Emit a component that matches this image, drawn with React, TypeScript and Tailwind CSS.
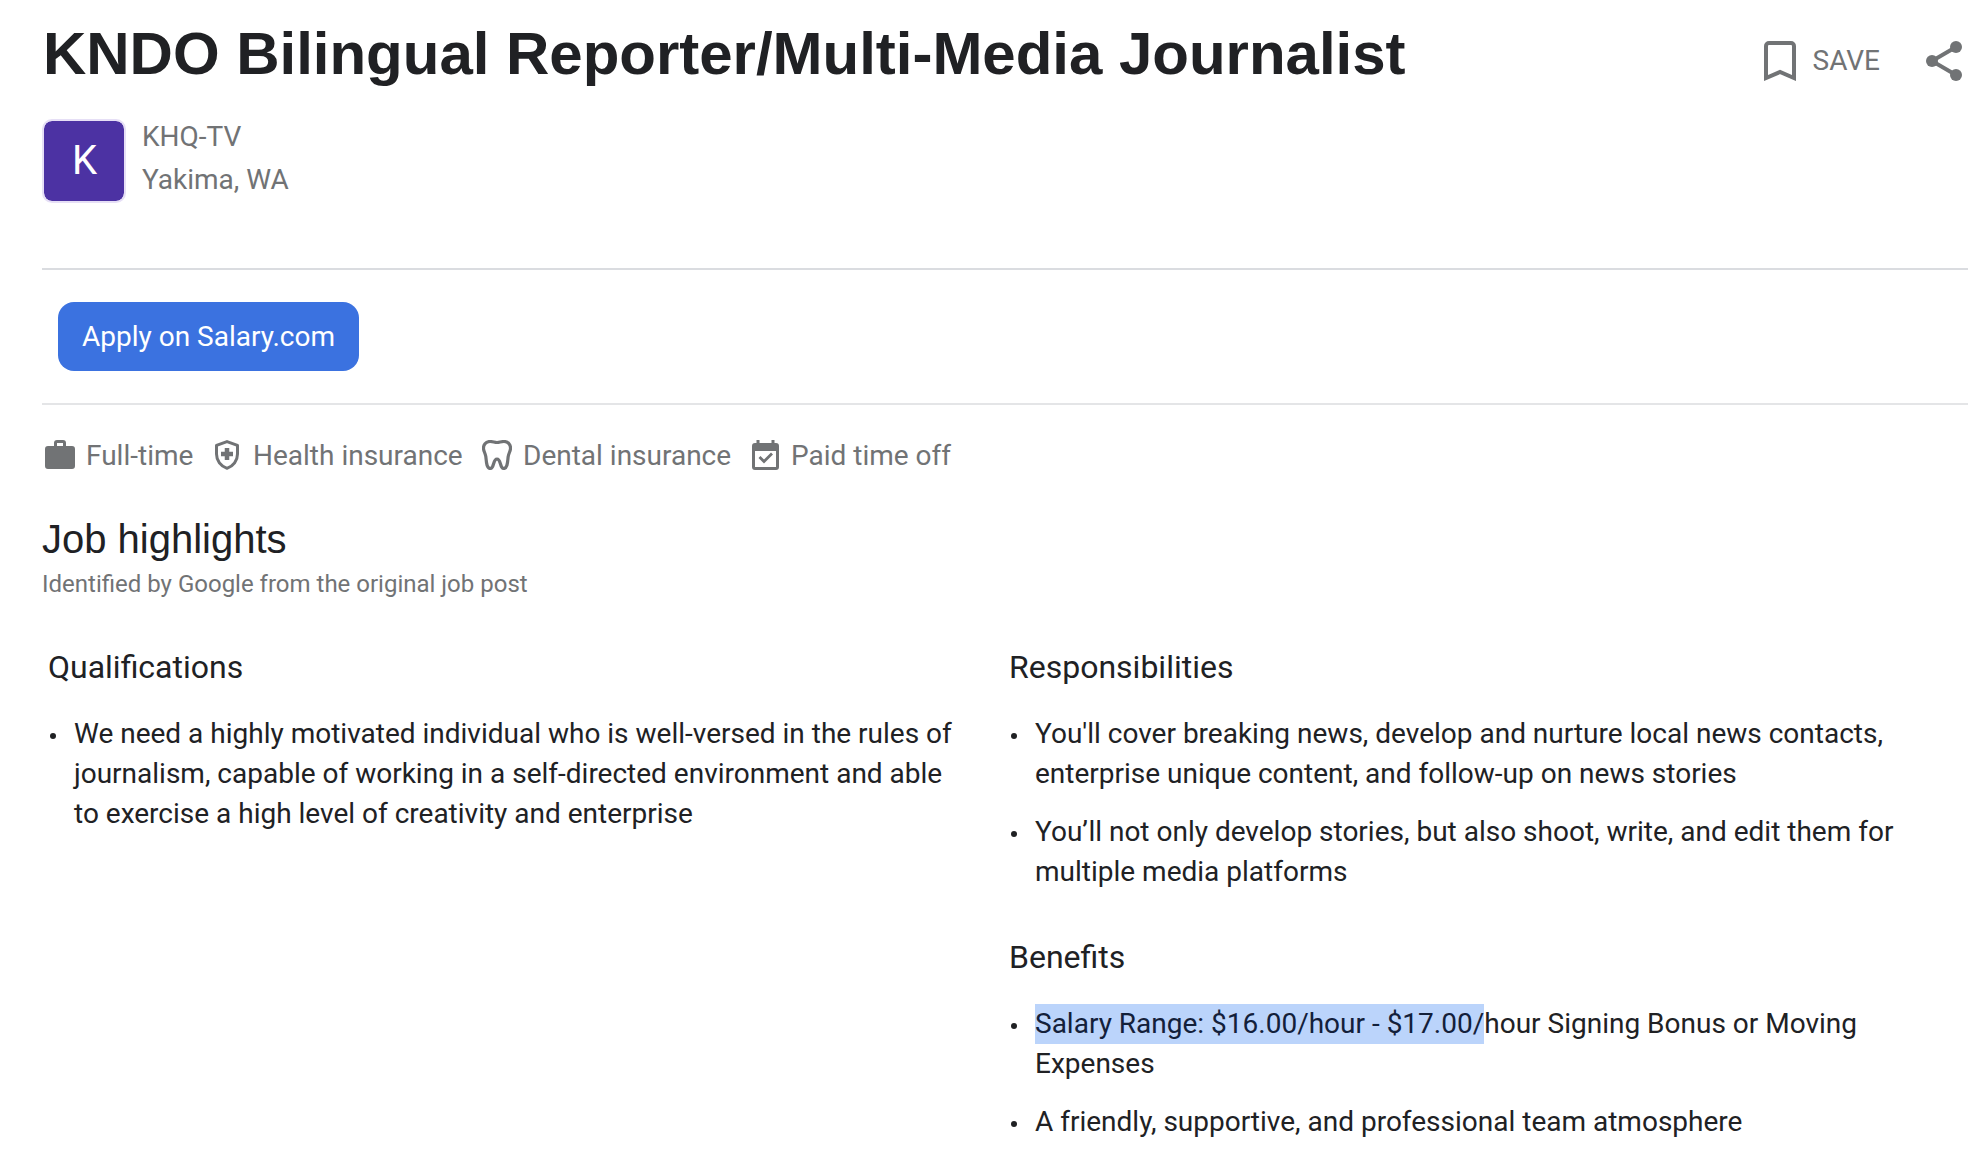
import React from "react";

type HighlightSectionProps = {
  title: string;
  items: React.ReactNode[];
};

type PerkProps = {
  icon: React.ReactNode;
  label: string;
  className?: string;
};

const BookmarkIcon = () => (
  <svg width="32" height="40" viewBox="0 0 32 40" fill="none">
    <path
      d="M2 37V5a3 3 0 0 1 3-3h22a3 3 0 0 1 3 3v32l-14-6z"
      stroke="currentColor"
      strokeWidth="4"
    />
  </svg>
);

const ShareIcon = () => (
  <svg width="36" height="40" viewBox="0 0 36 40">
    <path d="M30 6L6 20l24 14" fill="none" stroke="currentColor" strokeWidth="4" />
    <circle cx="30" cy="6" r="6" fill="currentColor" />
    <circle cx="6" cy="20" r="6" fill="currentColor" />
    <circle cx="30" cy="34" r="6" fill="currentColor" />
  </svg>
);

const BriefcaseIcon = () => (
  <svg width="30" height="30" viewBox="0 0 30 30" fill="currentColor">
    <path
      fillRule="evenodd"
      d="M9 6V3a3 3 0 0 1 3-3h6a3 3 0 0 1 3 3v3h6a3 3 0 0 1 3 3v17a3 3 0 0 1-3 3H3a3 3 0 0 1-3-3V9a3 3 0 0 1 3-3zm3 0h6V3h-6z"
    />
  </svg>
);

const ShieldIcon = () => (
  <svg width="24" height="30" viewBox="0 0 24 30">
    <path
      d="M12 1.600L22.500 5.400v8.600c0 6.600-4.200 12.200-10.500 14.300C5.700 26.200 1.500 20.600 1.500 14V5.400z"
      fill="none"
      stroke="currentColor"
      strokeWidth="3"
      strokeLinejoin="round"
    />
    <path d="M12 8v12M6 14h12" stroke="currentColor" strokeWidth="4.500" />
  </svg>
);

const ToothIcon = () => (
  <svg width="30" height="30" viewBox="0 0 30 30" fill="none">
    <path
      d="M8 1.500C3.500 1.500 1.300 5 1.500 8.500c.2 3 1.700 4.500 2.300 8 .6 3.800.3 12 4.400 12 4.300 0 2.500-9.500 6.800-9.500s2.500 9.500 6.800 9.500c4.100 0 3.800-8.200 4.400-12 .6-3.500 2.100-5 2.300-8C28.700 5 26.500 1.500 22 1.500c-3 0-4.500 1-7 1s-4-1-7-1z"
      stroke="currentColor"
      strokeWidth="3.200"
      strokeLinejoin="round"
    />
  </svg>
);

const CalendarIcon = () => (
  <svg width="27" height="30" viewBox="0 0 27 30" fill="none">
    <path
      fillRule="evenodd"
      fill="currentColor"
      d="M4.500 0h3v3h12V0h3v3H24a3 3 0 0 1 3 3v21a3 3 0 0 1-3 3H3a3 3 0 0 1-3-3V6a3 3 0 0 1 3-3h1.500zM3 11v16h21V11z"
    />
    <path d="M7.500 17l4.500 4.500 8-8" stroke="currentColor" strokeWidth="2.800" />
  </svg>
);

const Perk: React.FC<PerkProps> = ({ icon, label, className }) => (
  <div className={`flex items-center ${className ?? ""}`}>
    {icon}
    <span className="pt-0.5">{label}</span>
  </div>
);

const HighlightSection: React.FC<HighlightSectionProps> = ({ title, items }) => (
  <section>
    <h3 className="text-[32px] leading-10">{title}</h3>
    <ul className="mt-[27px] flex flex-col gap-[18px]">
      {items.map((item, index) => (
        <li key={index} className="flex text-[28px] leading-10">
          <span className="mt-[19px] mr-[18px] ml-[2px] size-1.5 shrink-0 rounded-full bg-[#202124]" />
          <span>{item}</span>
        </li>
      ))}
    </ul>
  </section>
);

const qualifications = [
  "We need a highly motivated individual who is well-versed in the rules of journalism, capable of working in a self-directed environment and able to exercise a high level of creativity and enterprise",
];

const responsibilities = [
  "You'll cover breaking news, develop and nurture local news contacts, enterprise unique content, and follow-up on news stories",
  "You’ll not only develop stories, but also shoot, write, and edit them for multiple media platforms",
];

const benefits = [
  <>
    <mark className="bg-[#bbd4fb] pt-[3px] pb-1 text-[#13203a]">
      Salary Range: $16.00/hour - $17.00/
    </mark>
    hour Signing Bonus or Moving Expenses
  </>,
  "A friendly, supportive, and professional team atmosphere",
];

const App: React.FC = () => {
  return (
    <main className="h-[1158px] w-[1968px] overflow-hidden bg-white pl-[42px] font-[Roboto,sans-serif] text-[#202124]">
      <header className="box-content flex h-[250px] justify-between border-b-2 border-[#dadce0] pt-[18px]">
        <div>
          <h1 className="pl-px font-['Liberation_Sans',Arial,sans-serif] text-[60px] leading-[72px] font-bold tracking-[-0.02px] whitespace-nowrap">
            KNDO Bilingual Reporter/Multi-Media Journalist
          </h1>
          <div className="mt-[25px] flex">
            <div className="mt-1 flex size-[84px] items-center justify-center rounded-[10px] border-2 border-[#e6dff6] bg-[#4c32a3] bg-clip-padding pl-px text-[40px] text-white">
              K
            </div>
            <div className="ml-4 text-[28px] leading-[43px] text-[#717375]">
              <p>KHQ-TV</p>
              <p>Yakima, WA</p>
            </div>
          </div>
        </div>

        <div className="mt-[23px] flex h-10 items-center self-start pr-[6px] text-[#717375]">
          <button className="flex items-center gap-[17px] text-[28px]">
            <BookmarkIcon />
            SAVE
          </button>
          <button className="ml-[46px]">
            <ShareIcon />
          </button>
        </div>
      </header>

      <div className="flex h-[135px] items-center border-b-2 border-[#e4e5e7] pl-4">
        <button className="h-[69px] w-[301px] rounded-2xl bg-[#3b72e0] text-[28px] whitespace-nowrap text-white">
          Apply on Salary.com
        </button>
      </div>

      <div className="mt-[29px] flex pl-[3px] text-[28px] leading-10 text-[#717375]">
        <Perk icon={<BriefcaseIcon />} label="Full-time" className="w-[170px] gap-[11px]" />
        <Perk icon={<ShieldIcon />} label="Health insurance" className="w-[267px] gap-[14px]" />
        <Perk icon={<ToothIcon />} label="Dental insurance" className="w-[270px] gap-[11px]" />
        <Perk icon={<CalendarIcon />} label="Paid time off" className="gap-3" />
      </div>

      <h2 className="mt-[39px] font-['Liberation_Sans',Arial,sans-serif] text-[40px] leading-[48px]">
        Job highlights
      </h2>
      <p className="mt-[5px] text-2xl leading-8 text-[#717375]">
        Identified by Google from the original job post
      </p>

      <div className="mt-[47px] flex pl-[6px]">
        <div className="w-[961px] pr-[45px]">
          <HighlightSection title="Qualifications" items={qualifications} />
        </div>
        <div className="flex w-[900px] flex-col gap-[45px]">
          <HighlightSection title="Responsibilities" items={responsibilities} />
          <HighlightSection title="Benefits" items={benefits} />
        </div>
      </div>
    </main>
  );
};

export default App;
